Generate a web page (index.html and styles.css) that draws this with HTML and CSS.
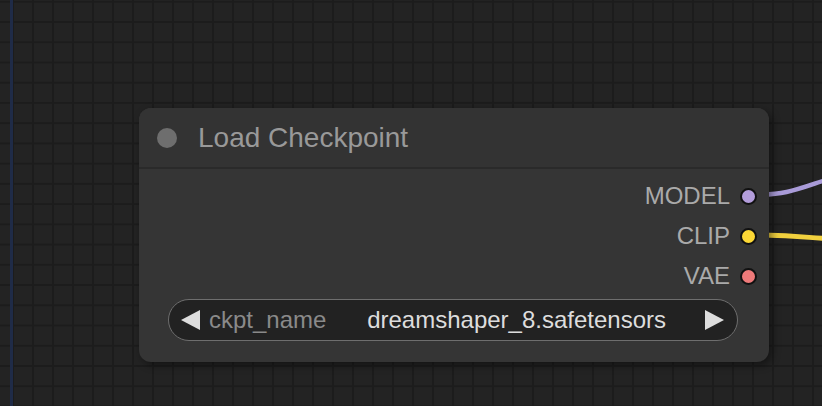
FILE: index.html
```html
<!DOCTYPE html>
<html lang="en">
<head>
  <meta charset="UTF-8" />
  <meta name="viewport" content="width=device-width, initial-scale=1" />
  <title>Load Checkpoint</title>
  <link rel="stylesheet" href="styles.css">
</head>
<body>
  <div class="canvas">
    <svg class="wires" width="822" height="406" viewBox="0 0 822 406">
      <path class="wire wire-model" d="M 749 195 C 790 195 800 188 832 178" />
      <path class="wire wire-clip" d="M 749 235 C 790 235 800 237 832 239" />
    </svg>

    <div class="node">
      <div class="node-title">
        <span class="node-dot"></span>
        <span class="node-name">Load Checkpoint</span>
      </div>
      <div class="node-body">
        <ul class="outputs">
          <li class="slot">MODEL <span class="slot-dot model"></span></li>
          <li class="slot">CLIP <span class="slot-dot clip"></span></li>
          <li class="slot">VAE <span class="slot-dot vae"></span></li>
        </ul>
        <div class="combo">
          <span class="arrow arrow-left"></span>
          <span class="combo-label">ckpt_name</span>
          <span class="combo-value">dreamshaper_8.safetensors</span>
          <span class="arrow arrow-right"></span>
        </div>
      </div>
    </div>
  </div>
</body>
</html>
```

FILE: styles.css
```css
html, body {
  margin: 0;
  padding: 0;
}

body {
  font-family: "Liberation Sans", Arial, sans-serif;
  background: #222222;
  overflow: hidden;
}

.canvas {
  position: relative;
  width: 822px;
  height: 406px;
  background-color: #232323;
  background-image:
    linear-gradient(to right, transparent 10px, #1f2b47 10px, #1f2b47 13px, transparent 13px),
    linear-gradient(to right, #1c1c1c 2px, transparent 2px),
    linear-gradient(to bottom, #1c1c1c 2px, transparent 2px);
  background-size: 822px 406px, 20px 20px, 20px 20.24px;
  background-position: 0 0, 12px 0, 0 0.8px;
  background-repeat: no-repeat, repeat, repeat;
}

.wires {
  position: absolute;
  left: 0;
  top: 0;
}

.wire {
  fill: none;
  stroke-linecap: round;
}

.wire-model {
  stroke: #a99bd8;
  stroke-width: 4.5;
}

.wire-clip {
  stroke: #f1d03e;
  stroke-width: 5;
}

.node {
  position: absolute;
  left: 139px;
  top: 108px;
  width: 630px;
  height: 254px;
  background: #353535;
  border-radius: 12px;
  box-shadow: 3px 3px 8px rgba(0, 0, 0, 0.45);
  display: flex;
  flex-direction: column;
  overflow: hidden;
}

.node-title {
  height: 59px;
  display: flex;
  align-items: center;
  padding-left: 18px;
  background: #333333;
  border-bottom: 2px solid #2a2a2a;
}

.node-dot {
  width: 20px;
  height: 20px;
  border-radius: 50%;
  background: #6e6e6e;
}

.node-name {
  margin-left: 21px;
  font-size: 28px;
  color: #999999;
}

.node-body {
  flex: 1;
  padding: 7px 0 0 0;
  display: flex;
  flex-direction: column;
}

.outputs {
  list-style: none;
  margin: 0;
  padding: 0 12px 0 0;
}

.slot {
  height: 40px;
  display: flex;
  align-items: center;
  justify-content: flex-end;
  gap: 10px;
  font-size: 24px;
  color: #aaaaaa;
}

.slot-dot {
  width: 13px;
  height: 13px;
  border-radius: 50%;
  border: 2px solid #111111;
}

.slot-dot.model { background: #b39ddb; }
.slot-dot.clip { background: #fdd835; }
.slot-dot.vae { background: #ef7a7a; }

.combo {
  margin: 3px 31px 0 29px;
  height: 42px;
  box-sizing: border-box;
  border: 1px solid #6e6e6e;
  border-radius: 21px;
  background: #222222;
  display: flex;
  align-items: center;
  padding: 0 13px 0 12px;
  font-size: 24px;
}

.arrow {
  width: 0;
  height: 0;
  border-top: 10px solid transparent;
  border-bottom: 10px solid transparent;
}

.arrow-left {
  border-right: 19px solid #dddddd;
}

.arrow-right {
  border-left: 19px solid #dddddd;
  margin-left: 39px;
}

.combo-label {
  margin-left: 9px;
  color: #8a8a8a;
}

.combo-value {
  flex: 1;
  text-align: right;
  color: #dddddd;
}
```
